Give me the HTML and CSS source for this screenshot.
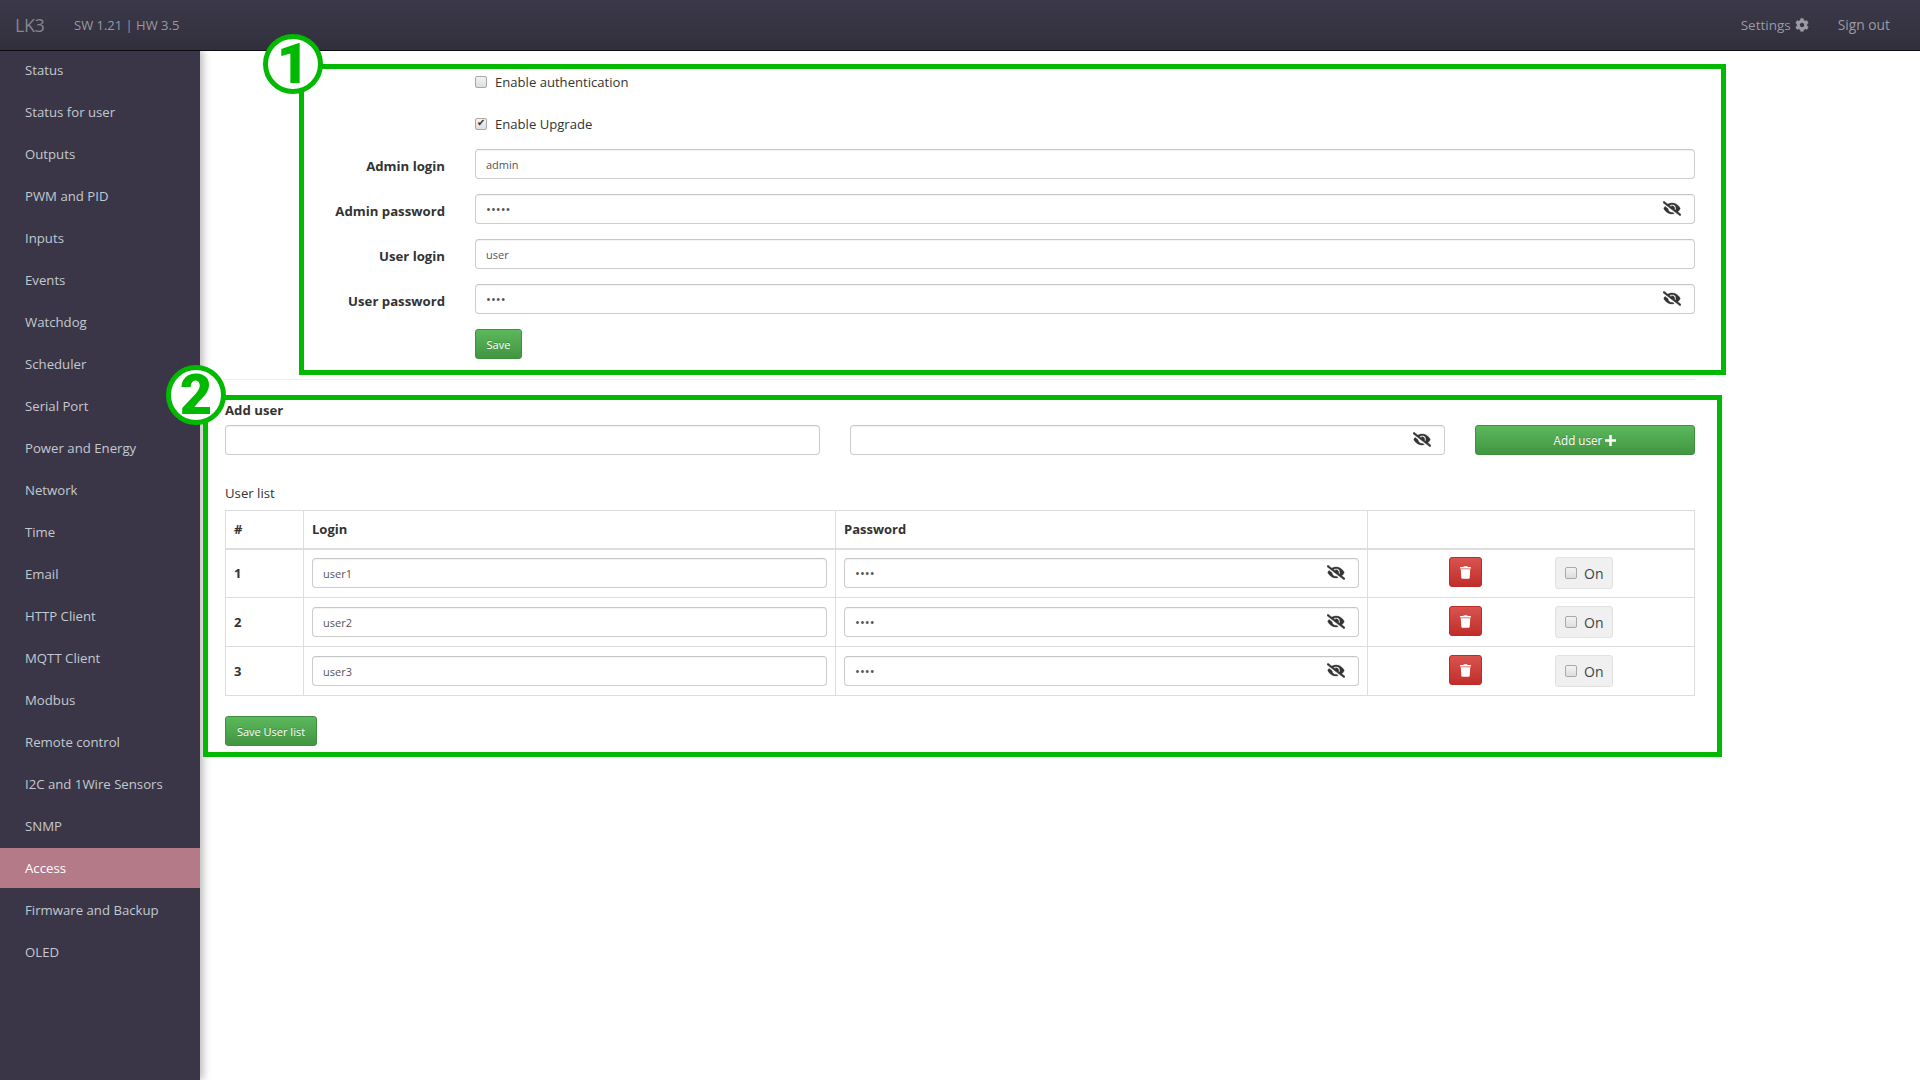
FILE: index.html
```html
<!DOCTYPE html>
<html lang="en">
<head>
<meta charset="utf-8">
<title>LK3 Access</title>
<link rel="stylesheet" href="styles.css">
</head>
<body>
<svg class="defs" width="0" height="0" aria-hidden="true">
  <symbol id="eye" viewBox="0 0 640 512"><path d="M320 400c-75.85 0-137.25-58.71-142.9-133.11L72.2 185.82c-13.79 17.3-26.48 35.59-36.72 55.59a32.35 32.35 0 0 0 0 29.19C89.71 376.41 197.07 448 320 448c26.91 0 52.87-4 77.89-10.46L346 397.39a144.13 144.13 0 0 1-26 2.61zm313.82 58.1l-110.55-85.44a331.25 331.25 0 0 0 81.25-102.07 32.35 32.35 0 0 0 0-29.19C550.29 135.59 442.93 64 320 64a308.15 308.15 0 0 0-147.32 37.7L45.46 3.37A16 16 0 0 0 23 6.18L3.37 31.45A16 16 0 0 0 6.18 53.9l588.36 454.73a16 16 0 0 0 22.46-2.81l19.64-25.27a16 16 0 0 0-2.82-22.45zm-183.72-142l-39.3-30.38A94.75 94.75 0 0 0 416 256a94.76 94.76 0 0 0-121.31-92.21A47.65 47.65 0 0 1 304 192a46.64 46.64 0 0 1-1.54 10l-73.61-56.89A142.31 142.31 0 0 1 320 112a143.92 143.92 0 0 1 144 144c0 21.63-5.29 41.79-13.9 60.11z"/></symbol>
  <symbol id="trash" viewBox="0 0 448 512"><path d="M432 32H312l-9.4-18.7A24 24 0 0 0 281.1 0H166.8a23.72 23.72 0 0 0-21.4 13.3L136 32H16A16 16 0 0 0 0 48v32a16 16 0 0 0 16 16h416a16 16 0 0 0 16-16V48a16 16 0 0 0-16-16zM53.2 467a48 48 0 0 0 47.9 45h245.8a48 48 0 0 0 47.9-45L416 128H32z"/></symbol>
  <symbol id="cog" viewBox="0 0 512 512"><path d="M487.4 315.7l-42.6-24.6c4.3-23.2 4.3-47 0-70.2l42.6-24.6c4.9-2.8 7.1-8.6 5.5-14-11.1-35.6-30-67.8-54.7-94.6-3.8-4.1-10-5.1-14.8-2.3L380.8 110c-17.9-15.4-38.5-27.3-60.8-35.1V25.8c0-5.6-3.9-10.5-9.4-11.7-36.7-8.2-74.3-7.8-109.2 0-5.5 1.2-9.4 6.1-9.4 11.7V75c-22.2 7.9-42.8 19.8-60.8 35.1L88.7 85.5c-4.9-2.8-11-1.9-14.8 2.3-24.7 26.7-43.6 58.9-54.7 94.6-1.7 5.4.6 11.2 5.5 14L67.3 221c-4.3 23.2-4.3 47 0 70.2l-42.6 24.6c-4.9 2.8-7.1 8.6-5.5 14 11.1 35.6 30 67.8 54.7 94.6 3.8 4.1 10 5.1 14.8 2.3l42.6-24.6c17.9 15.4 38.5 27.3 60.8 35.1v49.2c0 5.6 3.9 10.5 9.4 11.7 36.7 8.2 74.3 7.8 109.2 0 5.5-1.2 9.4-6.1 9.4-11.7v-49.2c22.2-7.9 42.8-19.8 60.8-35.1l42.6 24.6c4.9 2.8 11 1.9 14.8-2.3 24.7-26.7 43.6-58.9 54.7-94.6 1.5-5.5-.7-11.3-5.6-14.1zM256 336c-44.1 0-80-35.9-80-80s35.9-80 80-80 80 35.9 80 80-35.9 80-80 80z"/></symbol>
</svg>

<header class="topbar">
  <div class="brand"><span class="logo">LK3</span><span class="version">SW 1.21 | HW 3.5</span></div>
  <nav class="topnav">
    <a class="settings">Settings <svg class="cog"><use href="#cog"/></svg></a>
    <a>Sign out</a>
  </nav>
</header>

<div class="layout">
  <aside class="sidebar">
    <a>Status</a>
    <a>Status for user</a>
    <a>Outputs</a>
    <a>PWM and PID</a>
    <a>Inputs</a>
    <a>Events</a>
    <a>Watchdog</a>
    <a>Scheduler</a>
    <a>Serial Port</a>
    <a>Power and Energy</a>
    <a>Network</a>
    <a>Time</a>
    <a>Email</a>
    <a>HTTP Client</a>
    <a>MQTT Client</a>
    <a>Modbus</a>
    <a>Remote control</a>
    <a>I2C and 1Wire Sensors</a>
    <a>SNMP</a>
    <a class="active">Access</a>
    <a>Firmware and Backup</a>
    <a>OLED</a>
  </aside>

  <main class="content">
    <form class="access-form">
      <div class="form-row check-row">
        <span></span>
        <label class="check"><input type="checkbox"> Enable authentication</label>
      </div>
      <div class="form-row check-row last">
        <span></span>
        <label class="check"><input type="checkbox" checked> Enable Upgrade</label>
      </div>
      <div class="form-row">
        <label class="field-label">Admin login</label>
        <input class="text-input" type="text" value="admin">
      </div>
      <div class="form-row">
        <label class="field-label">Admin password</label>
        <div class="pw-wrap">
          <input class="text-input" type="password" value="admin">
          <svg class="eye"><use href="#eye"/></svg>
        </div>
      </div>
      <div class="form-row">
        <label class="field-label">User login</label>
        <input class="text-input" type="text" value="user">
      </div>
      <div class="form-row">
        <label class="field-label">User password</label>
        <div class="pw-wrap">
          <input class="text-input" type="password" value="user">
          <svg class="eye"><use href="#eye"/></svg>
        </div>
      </div>
      <div class="form-row save-row">
        <span></span>
        <div><button class="btn btn-green btn-save" type="button">Save</button></div>
      </div>
    </form>

    <hr class="divider">

    <section class="users">
      <h4 class="add-title">Add user</h4>
      <div class="add-row">
        <input class="text-input" type="text">
        <div class="pw-wrap">
          <input class="text-input" type="text">
          <svg class="eye"><use href="#eye"/></svg>
        </div>
        <button class="btn btn-green btn-add" type="button">Add user <svg class="plus" viewBox="0 0 12 12"><path d="M4.6 0h2.8v4.6H12v2.8H7.4V12H4.6V7.4H0V4.6h4.6z"/></svg></button>
      </div>

      <div class="list-title">User list</div>
      <table class="user-table">
        <colgroup><col class="c-num"><col class="c-login"><col class="c-pass"><col class="c-act"></colgroup>
        <thead>
          <tr><th>#</th><th>Login</th><th>Password</th><th></th></tr>
        </thead>
        <tbody>
          <tr>
            <th>1</th>
            <td><input class="text-input" type="text" value="user1"></td>
            <td><div class="pw-wrap"><input class="text-input" type="password" value="user"><svg class="eye"><use href="#eye"/></svg></div></td>
            <td><div class="actions"><button class="btn btn-red" type="button"><svg class="trash"><use href="#trash"/></svg></button><label class="toggle"><input type="checkbox"> On</label></div></td>
          </tr>
          <tr>
            <th>2</th>
            <td><input class="text-input" type="text" value="user2"></td>
            <td><div class="pw-wrap"><input class="text-input" type="password" value="user"><svg class="eye"><use href="#eye"/></svg></div></td>
            <td><div class="actions"><button class="btn btn-red" type="button"><svg class="trash"><use href="#trash"/></svg></button><label class="toggle"><input type="checkbox"> On</label></div></td>
          </tr>
          <tr>
            <th>3</th>
            <td><input class="text-input" type="text" value="user3"></td>
            <td><div class="pw-wrap"><input class="text-input" type="password" value="user"><svg class="eye"><use href="#eye"/></svg></div></td>
            <td><div class="actions"><button class="btn btn-red" type="button"><svg class="trash"><use href="#trash"/></svg></button><label class="toggle"><input type="checkbox"> On</label></div></td>
          </tr>
        </tbody>
      </table>
      <button class="btn btn-green btn-savelist" type="button">Save User list</button>
    </section>
  </main>
</div>

<div class="callout callout-1"></div>
<div class="badge badge-1">1</div>
<div class="callout callout-2"></div>
<div class="badge badge-2">2</div>
</body>
</html>
```
FILE: styles.css
```css
* { box-sizing: border-box; }
html, body { margin: 0; height: 100%; }
body {
  font-family: "Open Sans", "Liberation Sans", sans-serif;
  font-size: 13px;
  color: #333;
  background: #fff;
  overflow: hidden;
  position: relative;
}
.defs { position: absolute; }

.topbar {
  height: 51px;
  display: flex;
  justify-content: space-between;
  align-items: center;
  padding: 0 30px 1px 15px;
  background: linear-gradient(#3b3849, #322f3d);
  border-bottom: 1px solid #0c0c10;
  color: #9a9aa2;
  position: relative;
  z-index: 2;
}
.brand { display: flex; align-items: center; }
.logo { font-size: 18px; width: 59px; color: #85858f; letter-spacing: -0.5px; }
.version { font-size: 13px; }
.topnav { display: flex; align-items: center; gap: 29px; font-size: 13.8px; }
.settings { display: flex; align-items: center; gap: 4px; font-size: 13.5px; }
.cog { width: 14px; height: 14px; fill: #9a9aa2; }

.layout { display: flex; height: 1029px; }

.sidebar {
  flex: 0 0 200px;
  height: 1030px;
  margin-top: -1px;
  background: #3a3647;
  box-shadow: 3px 0 8px rgba(0, 0, 0, 0.28);
  z-index: 1;
}
.sidebar a {
  display: flex;
  align-items: center;
  height: 40px;
  margin-bottom: 2px;
  padding-left: 25px;
  color: #c3c9cf;
  font-size: 13.2px;
}
.sidebar a.active { background: #b47a88; color: #fff; }

.content { flex: 1; padding: 17px 225px 0 25px; }

.form-row {
  display: grid;
  grid-template-columns: 220px 1fr;
  column-gap: 30px;
  align-items: center;
  margin-bottom: 15px;
}
.check-row { height: 28px; margin-bottom: 14px; }
.check-row.last { margin-bottom: 11px; }
.save-row { margin-bottom: 20px; }
.field-label { font-size: 13.2px; font-weight: 700; text-align: right; color: #333; position: relative; top: 2px; }
.check { display: flex; align-items: center; gap: 8px; color: #333; font-size: 13.1px; }

input[type="checkbox"] {
  appearance: none;
  margin: 0;
  width: 12px;
  height: 12px;
  flex: none;
  background: linear-gradient(#f3f3f3, #dedede);
  border: 1px solid #a9a9a9;
  border-radius: 2px;
  position: relative;
}
input[type="checkbox"]:checked::after {
  content: "✔";
  position: absolute;
  left: 1px;
  top: -3px;
  font: 10px/14px "DejaVu Sans", sans-serif;
  color: #333;
}

.text-input {
  display: block;
  width: 100%;
  height: 30px;
  padding: 0 10px;
  font-family: "Open Sans", "Liberation Sans", sans-serif;
  font-size: 11px;
  color: #555;
  background: #fff;
  border: 1px solid #ccc;
  border-top-color: #c6c6c6;
  border-radius: 4px;
  box-shadow: inset 0 1px 1px rgba(0, 0, 0, 0.05);
  outline: none;
}
.text-input[type="password"] { font-size: 13px; }
.pw-wrap { position: relative; }
.eye {
  position: absolute;
  right: 14px;
  top: 7px;
  width: 18px;
  height: 15px;
  fill: #333;
  stroke: #333;
  stroke-width: 18px;
}

.btn {
  display: inline-flex;
  align-items: center;
  justify-content: center;
  height: 30px;
  padding: 0;
  font-family: "Open Sans", "Liberation Sans", sans-serif;
  font-size: 11px;
  color: #fff;
  border-radius: 3px;
  border: 1px solid transparent;
}
.btn-green {
  background: linear-gradient(#5cb85c, #419641);
  border-color: #3e8f3e;
  text-shadow: 0 -1px 0 rgba(0, 0, 0, 0.2);
}
.btn-red {
  width: 33px;
  background: linear-gradient(#d9534f, #c12e2a);
  border-color: #b92c28;
}
.btn-save { width: 47px; }
.btn-add { width: 220px; gap: 3px; font-size: 11.7px; }
.btn-savelist { width: 92px; margin-top: 20px; }
.plus { width: 11px; height: 11px; fill: #fff; }
.trash { width: 11px; height: 13px; fill: #fff; }

.divider { border: 0; border-top: 1px solid #eee; margin: 0 0 0 -25px; height: 1px; }

.add-title { margin: 20px 0 5px; font-size: 13.2px; line-height: 20px; font-weight: 700; color: #333; }
.add-row {
  display: grid;
  grid-template-columns: 595px 595px 220px;
  column-gap: 30px;
}
.list-title { margin: 28px 0 7px; line-height: 20px; color: #333; font-size: 13.2px; }

.user-table {
  width: 1470px;
  table-layout: fixed;
  border-collapse: collapse;
  border: 1px solid #ddd;
}
.c-num { width: 78px; }
.c-login { width: 532px; }
.c-pass { width: 532px; }
.user-table th, .user-table td {
  border: 1px solid #ddd;
  padding: 0 8px;
  text-align: left;
  vertical-align: middle;
  font-weight: 700;
  color: #333;
}
.user-table thead th { height: 38px; border-bottom-width: 2px; }
.user-table tbody tr { height: 49px; }
.user-table td { padding: 0 8px 0 8px; font-weight: 400; }
.actions { display: flex; align-items: flex-start; padding-left: 73px; gap: 73px; }
.toggle {
  display: flex;
  align-items: center;
  gap: 7px;
  width: 58px;
  height: 32px;
  padding-left: 9px;
  font-size: 14px;
  color: #444;
  background: #f0f0f0;
  border: 1px solid #e2e2e2;
  border-radius: 3px;
}

.callout { position: absolute; border: 5px solid #00b900; pointer-events: none; z-index: 3; }
.callout-1 { left: 299px; top: 64px; width: 1427px; height: 311px; }
.callout-2 { left: 203px; top: 395px; width: 1519px; height: 362px; }
.badge {
  position: absolute;
  width: 60px;
  height: 60px;
  border: 5px solid #00b900;
  border-radius: 50%;
  background: #fff;
  color: #00b900;
  font: 900 56px/50px Roboto, "Liberation Sans", sans-serif;
  text-align: center;
  z-index: 4;
}
.badge-1 { left: 263px; top: 34px; }
.badge-2 { left: 166px; top: 365px; }
```
